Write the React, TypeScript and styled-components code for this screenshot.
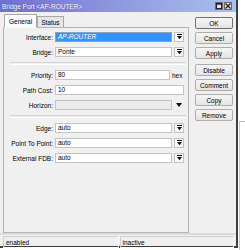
import React from 'react'
import styled, { createGlobalStyle } from 'styled-components'

const GlobalStyle = createGlobalStyle`
  html, body {
    margin: 0;
    padding: 0;
    background: #ffffff;
  }
  body {
    font-family: 'Liberation Sans', Arial, sans-serif;
    font-size: 6.5px;
    color: #000;
  }
`

const DropIcon = () => (
  <svg width="5" height="6" viewBox="0 0 5 6">
    <rect x="0" y="0" width="5" height="1" fill="#111" />
    <polygon points="0,2 5,2 2.5,5.2" fill="#111" />
  </svg>
)

const PlainArrow = () => (
  <svg width="6" height="4" viewBox="0 0 6 4">
    <polygon points="0,0 6,0 3,4" fill="#111" />
  </svg>
)

interface FieldRowProps {
  label: string
  value?: string
  width: number
  selected?: boolean
  disabled?: boolean
  trailing?: 'drop' | 'arrow' | 'hex'
}

const FieldRow = ({ label, value, width, selected, disabled, trailing }: FieldRowProps) => (
  <Row>
    <Label>{label}</Label>
    <Field $width={width} $selected={selected} $disabled={disabled}>
      {value}
    </Field>
    {trailing === 'drop' && (
      <DropButton>
        <DropIcon />
      </DropButton>
    )}
    {trailing === 'arrow' && (
      <ArrowSlot>
        <PlainArrow />
      </ArrowSlot>
    )}
    {trailing === 'hex' && <Unit>hex</Unit>}
  </Row>
)

const actions = ['OK', 'Cancel', 'Apply']
const extraActions = ['Disable', 'Comment', 'Copy', 'Remove']

const App = () => {
  return (
    <>
      <GlobalStyle />
      <Desktop>
        <BackWindow />
        <Window>
          <TitleBar>
            <Title>Bridge Port &lt;AP-ROUTER&gt;</Title>
            <TitleButtons>
              <TitleButton>
                <svg width="6" height="6" viewBox="0 0 6 6">
                  <rect x="0.5" y="0.5" width="5" height="5" fill="none" stroke="#222" />
                  <rect x="0.5" y="0.5" width="5" height="1.2" fill="#222" />
                </svg>
              </TitleButton>
              <TitleButton>
                <svg width="6" height="6" viewBox="0 0 6 6">
                  <path d="M0.5 0.5 L5.5 5.5 M5.5 0.5 L0.5 5.5" stroke="#222" strokeWidth="1.3" />
                </svg>
              </TitleButton>
            </TitleButtons>
          </TitleBar>
          <Body>
            <Main>
              <Tabs>
                <Tab $active>General</Tab>
                <Tab>Status</Tab>
              </Tabs>
              <Panel>
                <FieldRow label="Interface:" value="AP-ROUTER" width={117} selected trailing="drop" />
                <FieldRow label="Bridge:" value="Ponte" width={117} trailing="drop" />
                <Separator />
                <FieldRow label="Priority:" value="80" width={115} trailing="hex" />
                <FieldRow label="Path Cost:" value="10" width={129} />
                <FieldRow label="Horizon:" width={117} disabled trailing="arrow" />
                <Separator />
                <FieldRow label="Edge:" value="auto" width={117} trailing="drop" />
                <FieldRow label="Point To Point:" value="auto" width={117} trailing="drop" />
                <FieldRow label="External FDB:" value="auto" width={117} trailing="drop" />
              </Panel>
            </Main>
            <ButtonColumn>
              <ButtonGroup>
                {actions.map((a) => (
                  <ActionButton key={a} $default={a === 'OK'}>
                    {a}
                  </ActionButton>
                ))}
              </ButtonGroup>
              <ButtonGroup>
                {extraActions.map((a) => (
                  <ActionButton key={a}>{a}</ActionButton>
                ))}
              </ButtonGroup>
            </ButtonColumn>
          </Body>
          <StatusBar>
            <StatusCell $width={116}>enabled</StatusCell>
            <StatusCell $width={115}>inactive</StatusCell>
          </StatusBar>
        </Window>
      </Desktop>
    </>
  )
}

const Desktop = styled.div`
  position: relative;
  width: 245px;
  height: 250px;
  background: #ffffff;
  overflow: hidden;
`

const BackWindow = styled.div`
  position: absolute;
  left: 239px;
  top: 121px;
  width: 20px;
  height: 140px;
  border-top: 1px solid #b8b8b8;
  border-left: 1px solid #c8c8c8;
  background: #ffffff;
`

const Window = styled.div`
  position: relative;
  box-sizing: border-box;
  width: 238px;
  height: 248px;
  background: #f0f0f0;
  border-right: 2px solid #3f3f3f;
  border-bottom: 2px solid #3f3f3f;
  display: flex;
  flex-direction: column;
`

const TitleBar = styled.div`
  height: 12px;
  flex: none;
  display: flex;
  align-items: center;
  justify-content: space-between;
  padding: 0 4px 0 2px;
  background: linear-gradient(to right, #6e70cf 0%, #8c94dc 45%, #a9c2ee 100%);
`

const Title = styled.div`
  color: #ffffff;
  font-size: 6.5px;
  white-space: nowrap;
  text-shadow: 0 0 1px rgba(40, 40, 110, 0.6);
`

const TitleButtons = styled.div`
  display: flex;
  gap: 1px;
`

const TitleButton = styled.div`
  box-sizing: border-box;
  width: 8px;
  height: 8px;
  display: flex;
  align-items: center;
  justify-content: center;
  background: #e4e4e4;
  border: 1px solid #6a6a6a;
`

const Body = styled.div`
  flex: none;
  height: 221px;
  display: flex;
  padding-left: 3px;
  padding-right: 3px;
  gap: 6px;
`

const Main = styled.div`
  width: 186px;
  display: flex;
  flex-direction: column;
`

const Tabs = styled.div`
  display: flex;
  align-items: flex-end;
  height: 14px;
  padding-left: 1px;
  margin-top: 1px;
`

const Tab = styled.div<{ $active?: boolean }>`
  box-sizing: border-box;
  height: ${({ $active }) => ($active ? '14px' : '11px')};
  padding: 0 ${({ $active }) => ($active ? '4px' : '3px')};
  display: flex;
  align-items: center;
  background: ${({ $active }) => ($active ? '#fafafa' : '#e6e6e6')};
  border: 1px solid #a8a8a8;
  border-bottom: ${({ $active }) => ($active ? '1px solid #fafafa' : 'none')};
  margin-bottom: ${({ $active }) => ($active ? '-1px' : '0')};
  position: relative;
  z-index: ${({ $active }) => ($active ? 1 : 0)};
`

const Panel = styled.div`
  box-sizing: border-box;
  flex: 1;
  border: 1px solid #b4b4b4;
  background: #f0f0f0;
  padding: 4px 0 0 0;
  display: flex;
  flex-direction: column;
  gap: 5px;
`

const Row = styled.div`
  display: flex;
  align-items: center;
  height: 10px;
  gap: 2px;
`

const Label = styled.div`
  width: 49px;
  text-align: right;
  white-space: nowrap;
`

const Field = styled.div<{ $width: number; $selected?: boolean; $disabled?: boolean }>`
  box-sizing: border-box;
  width: ${({ $width }) => $width}px;
  height: 10px;
  line-height: 8px;
  padding-left: 2px;
  border: 1px solid ${({ $selected }) => ($selected ? '#7aa7d8' : '#c4c4c4')};
  background: ${({ $selected, $disabled }) => ($selected ? '#3392ff' : $disabled ? '#ebebeb' : '#ffffff')};
  color: ${({ $selected }) => ($selected ? '#ffffff' : '#000000')};
  font-style: ${({ $selected }) => ($selected ? 'italic' : 'normal')};
  white-space: nowrap;
`

const DropButton = styled.div`
  box-sizing: border-box;
  width: 10px;
  height: 10px;
  display: flex;
  align-items: center;
  justify-content: center;
  background: #f7f7f7;
  border: 1px solid #c4c4c4;
`

const ArrowSlot = styled.div`
  width: 10px;
  height: 10px;
  display: flex;
  align-items: center;
  justify-content: center;
`

const Unit = styled.div`
  padding-left: 0;
`

const Separator = styled.div`
  height: 1px;
  margin: 0 2px 0 6px;
  border-top: 1px solid #d4d4d4;
  border-bottom: 1px solid #ffffff;
`

const ButtonColumn = styled.div`
  width: 38px;
  padding-top: 5px;
  display: flex;
  flex-direction: column;
  gap: 5px;
`

const ButtonGroup = styled.div`
  display: flex;
  flex-direction: column;
  gap: 3px;
`

const ActionButton = styled.div<{ $default?: boolean }>`
  box-sizing: border-box;
  height: 12px;
  display: flex;
  align-items: center;
  justify-content: center;
  border: 1px solid ${({ $default }) => ($default ? '#707070' : '#adadad')};
  border-radius: 2px;
  background: linear-gradient(to bottom, #f6f6f6, #e4e4e4);
  white-space: nowrap;
`

const StatusBar = styled.div`
  flex: none;
  display: flex;
  gap: 1px;
  padding: 1px 2px 0 3px;
  margin-top: 0;
  border-top: 2px solid #dcdcdc;
  height: 12px;
`

const StatusCell = styled.div<{ $width: number }>`
  box-sizing: border-box;
  width: ${({ $width }) => $width}px;
  height: 12px;
  padding-left: 2px;
  display: flex;
  align-items: center;
  border: 1px solid #d0d0d0;
  border-right-color: #ffffff;
  border-bottom-color: #ffffff;
`

export default App
